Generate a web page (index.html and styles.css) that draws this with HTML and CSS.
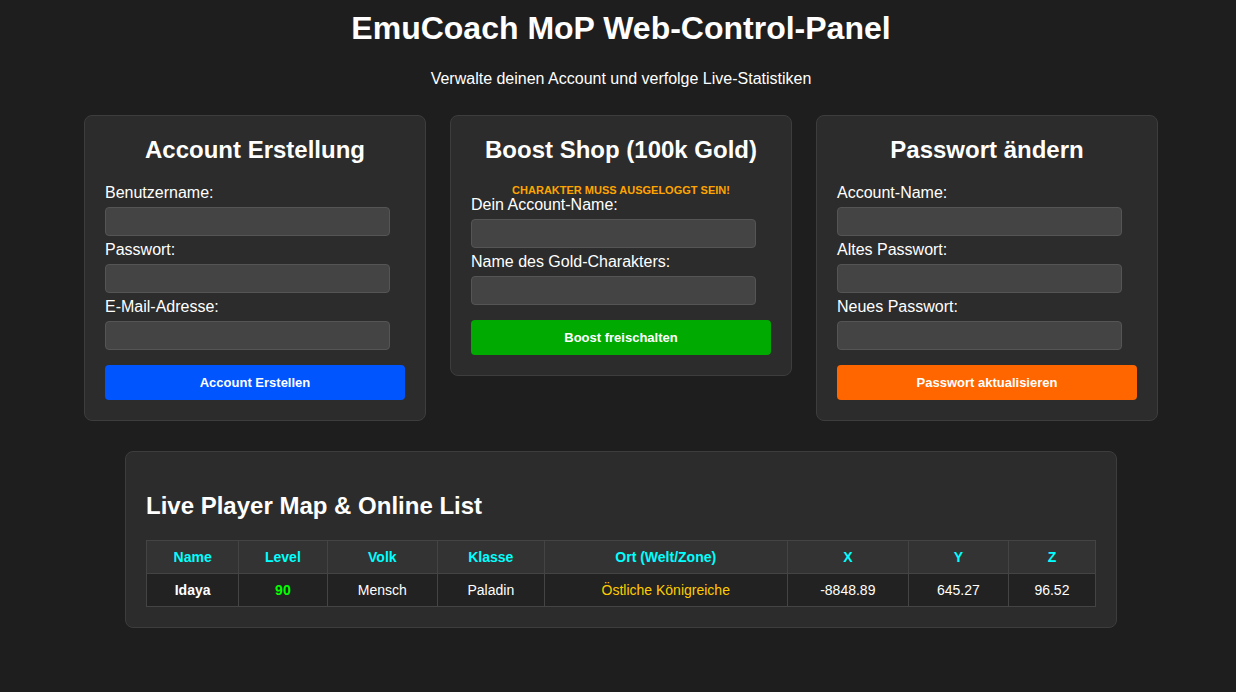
FILE: index.html
```html
<!DOCTYPE html>
<html lang="de">
<head>
<meta charset="utf-8">
<title>EmuCoach MoP Web-Control-Panel</title>
<link rel="stylesheet" href="styles.css">
</head>
<body>
  <header class="page-head">
    <h1>EmuCoach MoP Web-Control-Panel</h1>
    <p class="subtitle">Verwalte deinen Account und verfolge Live-Statistiken</p>
  </header>

  <main class="cards">
    <section class="card">
      <h2>Account Erstellung</h2>
      <form class="form">
        <label>Benutzername:</label>
        <input type="text">
        <label>Passwort:</label>
        <input type="password">
        <label>E-Mail-Adresse:</label>
        <input type="email">
        <button type="button" class="btn btn-blue">Account Erstellen</button>
      </form>
    </section>

    <section class="card">
      <h2>Boost Shop (100k Gold)</h2>
      <p class="warning">Charakter muss ausgeloggt sein!</p>
      <form class="form">
        <label>Dein Account-Name:</label>
        <input type="text">
        <label>Name des Gold-Charakters:</label>
        <input type="text">
        <button type="button" class="btn btn-green">Boost freischalten</button>
      </form>
    </section>

    <section class="card">
      <h2>Passwort ändern</h2>
      <form class="form">
        <label>Account-Name:</label>
        <input type="text">
        <label>Altes Passwort:</label>
        <input type="password">
        <label>Neues Passwort:</label>
        <input type="password">
        <button type="button" class="btn btn-orange">Passwort aktualisieren</button>
      </form>
    </section>
  </main>

  <section class="panel">
    <h2>Live Player Map &amp; Online List</h2>
    <table class="players">
      <thead>
        <tr>
          <th>Name</th>
          <th>Level</th>
          <th>Volk</th>
          <th>Klasse</th>
          <th>Ort (Welt/Zone)</th>
          <th>X</th>
          <th>Y</th>
          <th>Z</th>
        </tr>
      </thead>
      <tbody>
        <tr>
          <td class="name">Idaya</td>
          <td class="level">90</td>
          <td>Mensch</td>
          <td>Paladin</td>
          <td class="zone">Östliche Königreiche</td>
          <td>-8848.89</td>
          <td>645.27</td>
          <td>96.52</td>
        </tr>
      </tbody>
    </table>
  </section>
</body>
</html>
```

FILE: styles.css
```css
* {
  box-sizing: border-box;
}

html,
body {
  background: #1e1e1e;
}

body {
  margin: 0;
  padding: 10px 0 0 6px;
  color: #ffffff;
  font-family: "Liberation Sans", Arial, sans-serif;
}

.page-head {
  text-align: center;
}

.page-head h1 {
  margin: 0 0 23px;
  font-size: 32px;
  font-weight: bold;
}

.subtitle {
  margin: 0;
  font-size: 16px;
}

.cards {
  display: flex;
  justify-content: center;
  align-items: flex-start;
  gap: 24px;
  margin-top: 27px;
}

.card {
  width: 342px;
  padding: 20px;
  background: #2c2c2c;
  border: 1px solid #3d3d3d;
  border-radius: 8px;
}

.card h2 {
  margin: 0 0 20px;
  font-size: 24px;
  text-align: center;
}

.warning {
  margin: 0;
  color: #ffa500;
  font-size: 11px;
  font-weight: bold;
  text-transform: uppercase;
  text-align: center;
}

.form {
  display: flex;
  flex-direction: column;
  align-items: flex-start;
}

.form label {
  font-size: 16px;
  line-height: 18px;
}

.form input {
  width: 285px;
  height: 29px;
  margin: 5px 0;
  padding: 6px;
  background: #444444;
  border: 1px solid #555555;
  border-radius: 4px;
  color: #ffffff;
}

.btn {
  width: 100%;
  height: 35px;
  margin-top: 10px;
  border: 0;
  border-radius: 4px;
  color: #ffffff;
  font-family: "Liberation Sans", Arial, sans-serif;
  font-size: 13px;
  font-weight: bold;
}

.btn-blue {
  background: #0055ff;
}

.btn-green {
  background: #00aa00;
}

.btn-orange {
  background: #ff6600;
}

.panel {
  width: 992px;
  margin: 30px auto 0;
  padding: 20px;
  background: #2c2c2c;
  border: 1px solid #3d3d3d;
  border-radius: 8px;
}

.panel h2 {
  margin: 20px 0;
  font-size: 24px;
}

.players {
  width: 100%;
  border-collapse: collapse;
  font-size: 14px;
}

.players th,
.players td {
  padding: 8px;
  border: 1px solid #444444;
  text-align: center;
}

.players th {
  background: #333333;
  color: #00ffff;
  font-weight: bold;
}

.players td {
  background: #222222;
  color: #ffffff;
}

.players .name {
  font-weight: bold;
}

.players .level {
  color: #00ff00;
  font-weight: bold;
}

.players .zone {
  color: #ffcc00;
}
```
